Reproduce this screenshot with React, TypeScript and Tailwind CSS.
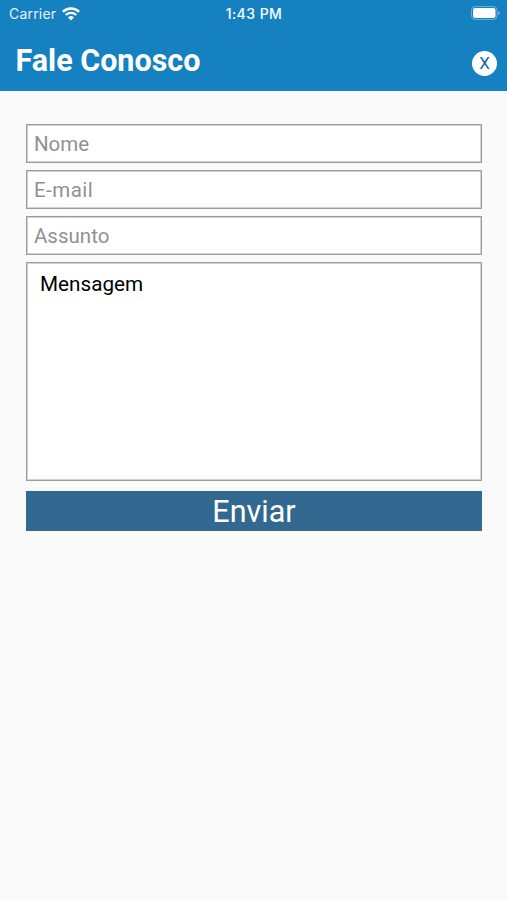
import { useState } from 'react';

const fieldClass =
  'block w-full h-[39px] px-[7px] border border-[#9c9c9c] shadow-[inset_0_0_0_1px_#d2d2d2] bg-white text-[20.5px] text-black placeholder:text-[#919191] placeholder:opacity-100 outline-none';

function StatusBar() {
  return (
    <div className="grid h-[28px] grid-cols-3 items-center px-[9px] font-['Inter',sans-serif] text-[14px] leading-none text-white">
      <div className="flex items-center gap-[6px]">
        <span className="tracking-[0.2px] opacity-90">Carrier</span>
        <svg width="18" height="14" viewBox="0 0 18 14" fill="none" stroke="currentColor" strokeWidth="2.4" className="-mt-px">
          <path d="M.9 4.8a11.6 11.6 0 0 1 16.2 0" />
          <path d="M3.8 8a7.4 7.4 0 0 1 10.4 0" />
          <path d="M9 13.6l-2.9-3.1a4.1 4.1 0 0 1 5.8 0z" fill="currentColor" stroke="none" />
        </svg>
      </div>
      <div className="pl-px text-center text-[14px] font-medium tracking-[0.45px]">1:43 PM</div>
      <div className="flex justify-end">
        <svg width="29" height="14" viewBox="0 0 29 14" className="-mt-[2px] -mr-[2px]">
          <rect x="0.5" y="0.5" width="25.5" height="13" rx="3.5" fill="none" stroke="white" strokeOpacity="0.35" />
          <rect x="2" y="2" width="22.5" height="10" rx="2" fill="white" />
          <path d="M27.2 5q1.4.7 1.4 2t-1.4 2z" fill="white" fillOpacity="0.5" />
        </svg>
      </div>
    </div>
  );
}

export default function App() {
  const [message, setMessage] = useState('Mensagem');

  return (
    <div className="min-h-screen bg-[#fafafa] font-['Roboto',sans-serif]">
      <header className="h-[90.5px] bg-[#1681c1] text-white">
        <StatusBar />
        <div className="flex h-[63px] items-center justify-between pr-[10px] pl-[15.5px]">
          <h1 className="pt-px text-[30.5px] leading-[63px] font-bold">Fale Conosco</h1>
          <button
            type="button"
            aria-label="Fechar"
            className="mt-[8px] flex size-[25px] items-center justify-center rounded-full bg-white text-[17px] leading-none font-normal text-[#12689f]"
          >
            X
          </button>
        </div>
      </header>

      <form className="flex flex-col gap-[7px] pt-[33.5px] pr-[25px] pl-[26px]" onSubmit={(e) => e.preventDefault()}>
        <input className={fieldClass} placeholder="Nome" />
        <input className={`${fieldClass} tracking-[0.45px]`} placeholder="E-mail" type="email" />
        <input className={fieldClass} placeholder="Assunto" />
        <textarea
          value={message}
          onChange={(e) => setMessage(e.target.value)}
          className="block h-[219px] w-full resize-none border border-[#9c9c9c] bg-white px-[13px] py-[8px] text-[20.7px] leading-[26px] text-black shadow-[inset_0_0_0_1px_#d2d2d2] outline-none"
        />
        <button type="submit" className="mt-[3px] h-[39.5px] w-full bg-[#336990] pt-px text-[30.5px] leading-[39px] text-white">
          Enviar
        </button>
      </form>
    </div>
  );
}
